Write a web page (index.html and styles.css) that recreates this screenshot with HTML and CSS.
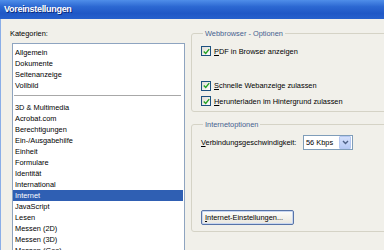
FILE: index.html
```html
<!DOCTYPE html>
<html>

<head>
    <title>Voreinstellungen</title>
    <link rel="stylesheet" href="styles.css">
</head>

<body>
    <div class="window">
        <div class="titlebar">Voreinstellungen</div>

        <div class="content">
            <div class="left">
                <div class="caption">Kategorien:</div>
                <div class="listbox">
                    <div class="item">Allgemein</div>
                    <div class="item">Dokumente</div>
                    <div class="item">Seitenanzeige</div>
                    <div class="item">Vollbild</div>
                    <div class="sep"></div>
                    <div class="item">3D &amp; Multimedia</div>
                    <div class="item">Acrobat.com</div>
                    <div class="item">Berechtigungen</div>
                    <div class="item">Ein-/Ausgabehilfe</div>
                    <div class="item">Einheit</div>
                    <div class="item">Formulare</div>
                    <div class="item">Identität</div>
                    <div class="item">International</div>
                    <div class="item selected">Internet</div>
                    <div class="item">JavaScript</div>
                    <div class="item">Lesen</div>
                    <div class="item">Messen (2D)</div>
                    <div class="item">Messen (3D)</div>
                    <div class="item">Messen (Geo)</div>
                </div>
            </div>

            <div class="right">
                <fieldset class="group web">
                    <legend>Webbrowser - Optionen</legend>
                    <div class="check row1">
                        <span class="box"><svg viewBox="0 0 9 9" width="7" height="7"><path d="M1 4.5 L3.5 7 L8 1.5" fill="none" stroke="#21a121" stroke-width="1.8"/></svg></span>
                        <span><u>P</u>DF in Browser anzeigen</span>
                    </div>
                    <div class="check row2">
                        <span class="box"><svg viewBox="0 0 9 9" width="7" height="7"><path d="M1 4.5 L3.5 7 L8 1.5" fill="none" stroke="#21a121" stroke-width="1.8"/></svg></span>
                        <span><u>S</u>chnelle Webanzeige zulassen</span>
                    </div>
                    <div class="check row3">
                        <span class="box"><svg viewBox="0 0 9 9" width="7" height="7"><path d="M1 4.5 L3.5 7 L8 1.5" fill="none" stroke="#21a121" stroke-width="1.8"/></svg></span>
                        <span><u>H</u>erunterladen im Hintergrund zulassen</span>
                    </div>
                </fieldset>

                <fieldset class="group inet">
                    <legend>Internetoptionen</legend>
                    <div class="speed">
                        <span class="speed-label"><u>V</u>erbindungsgeschwindigkeit:</span>
                        <div class="select">
                            <span class="value">56 Kbps</span>
                            <span class="arrow"><svg viewBox="0 0 7 5" width="7" height="5"><path d="M1 1 L3.5 3.5 L6 1" fill="none" stroke="#4d6185" stroke-width="1.4"/></svg></span>
                        </div>
                    </div>
                    <button class="btn"><u>I</u>nternet-Einstellungen...</button>
                </fieldset>
            </div>
        </div>
    </div>
</body>

</html>
```

FILE: styles.css
```css
body {
    margin: 0;
    padding: 0;
    font-family: "Liberation Sans", Arial, sans-serif;
    font-size: 7.4px;
    color: #000;
    background: #f1f0ea;
}

.window {
    width: 384px;
    height: 250px;
    overflow: hidden;
}

.titlebar {
    height: 19px;
    line-height: 18px;
    padding-left: 4px;
    font-family: "Liberation Sans", sans-serif;
    font-size: 9px;
    font-weight: bold;
    letter-spacing: -0.3px;
    color: #fff;
    text-shadow: 1px 1px 0 #0b2a7a;
    background: linear-gradient(#4f8ee9 0%, #2c68d2 35%, #1f58c6 70%, #2660cc 100%);
}

.content {
    display: flex;
    border-left: 1px solid #8aaee8;
    height: 231px;
}

.left {
    width: 184px;
    flex-shrink: 0;
}

.caption {
    margin-top: 9px;
    padding-left: 9px;
    line-height: 11px;
}

.listbox {
    margin: 4px 0 0 11px;
    width: 171px;
    height: 300px;
    padding-top: 2.5px;
    background: #fff;
    border: 1px solid #8ea4c0;
}

.item {
    height: 11px;
    line-height: 11px;
    padding-left: 2px;
    margin-right: 1px;
    white-space: nowrap;
}

.item.selected {
    background: #2f5fb3;
    color: #fff;
}

.sep {
    height: 0;
    margin: 4.5px 3px 5.5px 1px;
    border-top: 1px solid #a8a8a8;
}

/* Gruppen rechts */
.right {
    margin-left: 6px;
    width: 230px;
    flex-shrink: 0;
}

.group {
    margin: 0;
    padding: 0 0 0 9px;
    border: 1px solid #d5d3c6;
    border-radius: 3px;
    min-width: 0;
}

.group legend {
    margin-left: 2px;
    padding: 0 2px;
    line-height: 11px;
    color: #46618f;
}

.web {
    margin-top: 8.5px;
    padding-bottom: 4px;
}

.inet {
    margin-top: 6.5px;
    padding-bottom: 6px;
}

.check {
    display: flex;
    align-items: center;
    height: 12px;
    white-space: nowrap;
}

.row1 { margin-top: 6.5px; }
.row2 { margin-top: 22.5px; }
.row3 { margin-top: 3.5px; }

.box {
    display: flex;
    align-items: center;
    justify-content: center;
    width: 8px;
    height: 8px;
    margin-right: 3px;
    border: 1px solid #1c5180;
    background: linear-gradient(135deg, #dedcd3, #fff);
}

.speed {
    display: flex;
    align-items: center;
    margin-top: 5.5px;
    height: 15px;
}

.speed-label {
    width: 102px;
    white-space: nowrap;
}

.select {
    display: flex;
    align-items: center;
    justify-content: space-between;
    width: 48px;
    height: 13px;
    background: #fff;
    border: 1px solid #7f9db9;
}

.select .value {
    padding-left: 2px;
}

.arrow {
    display: flex;
    align-items: center;
    justify-content: center;
    width: 10px;
    height: 11px;
    margin-right: 1px;
    border: 1px solid #b5c8f2;
    border-radius: 1px;
    background: linear-gradient(#d4e0fb, #b7cbf5);
}

.btn {
    display: block;
    margin-top: 60px;
    width: 93px;
    height: 15px;
    padding: 0 0 0 3px;
    text-align: left;
    font-family: inherit;
    font-size: 7.4px;
    color: #000;
    border: 1px solid #5774a8;
    border-radius: 2px;
    background: linear-gradient(#fdfdfb, #e9e7de);
    box-shadow: inset 0 0 0 1px #c8d6f0;
}
```
